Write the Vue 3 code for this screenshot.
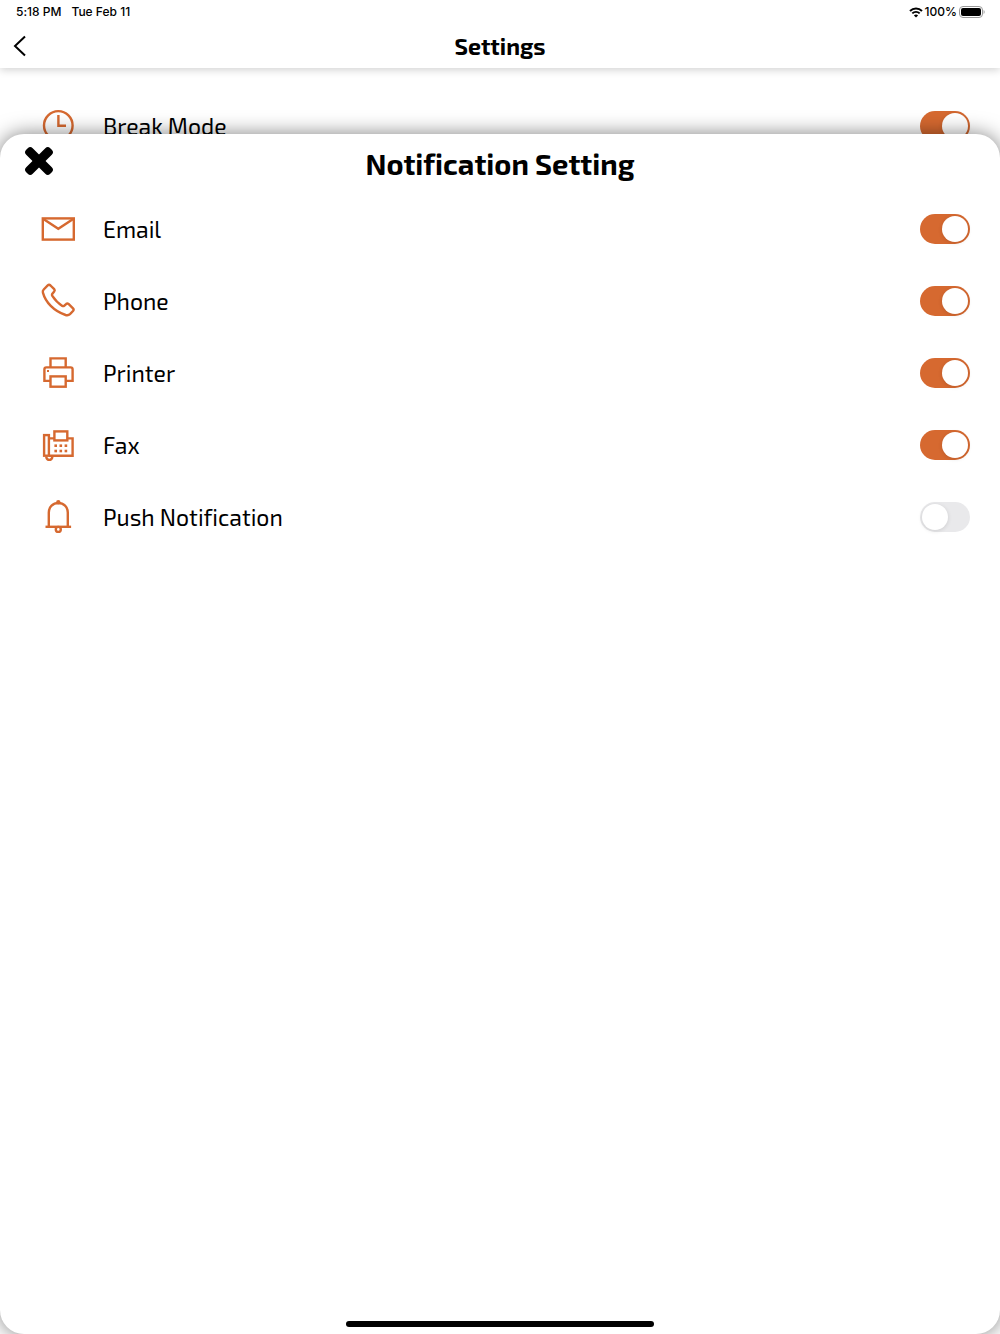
<template>
  <div class="screen">
    <!-- Status bar -->
    <div class="status-bar">
      <span>5:18 PM</span>
      <span class="date">Tue Feb 11</span>
      <div class="status-right">
        <svg class="wifi" viewBox="0 0 14 11" aria-hidden="true">
          <path d="M1 4 C4.4 0.7 9.6 0.7 13 4" />
          <path d="M3.3 6.4 C5.4 4.4 8.6 4.4 10.7 6.4" />
          <path class="dot" d="M7 10.6 L4.9 8.4 C6 7.2 8 7.2 9.1 8.4 Z" />
        </svg>
        <span>100%</span>
        <svg class="battery" viewBox="0 0 26 12" aria-hidden="true">
          <rect class="shell" x="0.5" y="0.5" width="23" height="11" rx="3.5" />
          <rect x="2" y="2" width="20" height="8" rx="2" />
          <path class="cap" d="M24.6 4 C26 4.6 26 7.4 24.6 8 Z" />
        </svg>
      </div>
    </div>

    <!-- Header -->
    <header class="header">
      <button class="back-btn" aria-label="Back">
        <svg viewBox="0 0 14 22" aria-hidden="true">
          <path d="M12 1.5 L2 11 L12 20.5" />
        </svg>
      </button>
      <h1>Settings</h1>
    </header>

    <!-- Settings list behind the sheet -->
    <main class="content">
      <label class="row">
        <svg class="icon" viewBox="0 0 34 34" aria-hidden="true">
          <circle cx="17.3" cy="16.4" r="14.3" />
          <path d="M17.4 6 V16.7 H25" />
        </svg>
        <span class="name">Break Mode</span>
        <input v-model="breakMode" type="checkbox" class="switch" />
      </label>
    </main>

    <!-- Notification sheet -->
    <section class="sheet">
      <div class="sheet-header">
        <button class="close-btn" aria-label="Close">
          <svg viewBox="0 0 30 30" aria-hidden="true">
            <rect x="-2" y="10.4" width="34" height="9.2" rx="3.5" transform="rotate(45 15 15)" />
            <rect x="-2" y="10.4" width="34" height="9.2" rx="3.5" transform="rotate(-45 15 15)" />
          </svg>
        </button>
        <h2>Notification Setting</h2>
      </div>

      <label v-for="item in items" :key="item.id" class="row">
        <svg class="icon" viewBox="0 0 34 34" aria-hidden="true">
          <template v-if="item.id === 'email'">
            <rect x="1.8" y="6.4" width="31" height="21.2" />
            <path d="M2.4 7 L17.3 16.8 L32.2 7" />
          </template>
          <template v-else-if="item.id === 'phone'">
            <path d="M6.7 1.4 Q8.1 0.2 9.5 1.5 L13.2 5.1 Q14.2 6.2 13.2 7.4 L11.2 9.9 Q10.6 10.9 11.3 11.9 Q15.6 18.4 21.3 21.9 Q22.3 22.4 23.2 21.7 L25.4 19.8 Q26.4 19 27.5 20 L32 24.3 Q33.2 25.6 32 27 L29 30.1 Q27.2 31.8 24.6 31 C12.6 27 4.6 18.2 1.9 8.6 Q1.4 6.8 2.7 5.5 Z" />
          </template>
          <template v-else-if="item.id === 'printer'">
            <path d="M9.5 11 V2.4 H24.7 V11" />
            <path d="M9.5 24.9 H3.4 V13.4 Q3.4 11.4 5.4 11.4 H29.6 Q31.6 11.4 31.6 13.4 V24.9 H24.7" />
            <rect x="9.5" y="20.4" width="15.2" height="10.3" />
            <rect class="fill" x="6" y="14" width="2" height="2" />
          </template>
          <template v-else-if="item.id === 'fax'">
            <rect x="3.1" y="7.1" width="4.8" height="20.6" />
            <path d="M8 10.4 H13.2 M26.4 10.4 H31.6 V27.7 H8" />
            <rect x="13.4" y="3.4" width="12.9" height="9" />
            <path d="M5.4 28.4 V29.6 A3 3 0 0 0 11.2 29.6 V28.4" />
            <g class="fill">
              <rect v-for="n in 6" :key="n" :x="13.4 + ((n - 1) % 3) * 5.1" :y="n > 3 ? 21.7 : 16.4" width="2.6" height="2.6" />
            </g>
          </template>
          <template v-else>
            <path d="M7.8 26.6 V12.6 C7.8 7 12 3 17.3 3 S26.8 7 26.8 12.6 V26.6" />
            <path d="M4.5 26.8 H30.1" />
            <circle cx="17.3" cy="29.4" r="2.5" />
            <circle class="fill" cx="17.3" cy="2.2" r="2.2" />
          </template>
        </svg>
        <span class="name">{{ item.label }}</span>
        <input v-model="item.enabled" type="checkbox" class="switch" />
      </label>

      <div class="home-indicator"></div>
    </section>
  </div>
</template>

<script setup>
import { ref } from 'vue';

const breakMode = ref(true);

const items = ref([
  { id: 'email', label: 'Email', enabled: true },
  { id: 'phone', label: 'Phone', enabled: true },
  { id: 'printer', label: 'Printer', enabled: true },
  { id: 'fax', label: 'Fax', enabled: true },
  { id: 'push', label: 'Push Notification', enabled: false }
]);
</script>

<style>
body {
  margin: 0;
  background: #fff;
}
</style>

<style scoped>
.screen {
  position: relative;
  min-height: 100vh;
  overflow: hidden;
  background: #fff;
  color: #000;
  font-family: 'Exo 2', 'Noto Sans', sans-serif;
  font-variant-ligatures: none;
}

.status-bar {
  position: relative;
  z-index: 1;
  display: flex;
  align-items: center;
  height: 24px;
  padding: 0 15px 0 16px;
  background: #fff;
  font-family: Inter, sans-serif;
  font-size: 12px;
  font-weight: 500;
}

.status-bar span {
  padding-bottom: 2px;
}

.date {
  margin-left: 10px;
}

.status-right {
  display: flex;
  align-items: center;
  gap: 2px;
  margin-left: auto;
}

.wifi {
  width: 14px;
  height: 11px;
  fill: none;
  stroke: #000;
  stroke-width: 2;
}

.wifi .dot {
  fill: #000;
  stroke: none;
}

.battery {
  width: 26px;
  height: 12px;
}

.battery .shell {
  fill: none;
  stroke: #999;
}

.battery .cap {
  fill: #999;
}

.header {
  position: relative;
  display: flex;
  align-items: center;
  justify-content: center;
  height: 44px;
  box-shadow: 0 2px 8px rgba(0, 0, 0, 0.18);
}

.header h1 {
  margin: 0;
  font-size: 23px;
  line-height: 30px;
  font-weight: 700;
}

button {
  padding: 0;
  border: none;
  background: none;
  cursor: pointer;
}

button svg {
  display: block;
  width: 100%;
  height: 100%;
}

.back-btn {
  position: absolute;
  left: 13px;
  top: 11px;
  width: 14px;
  height: 22px;
}

.back-btn svg {
  fill: none;
  stroke: #000;
  stroke-width: 2;
}

.content {
  padding-top: 22px;
}

.row {
  display: flex;
  align-items: center;
  height: 72px;
  padding: 0 30px 0 41px;
  cursor: pointer;
}

.icon {
  width: 34px;
  height: 34px;
  overflow: visible;
  fill: none;
  stroke: #d66930;
  stroke-width: 2.4;
}

.icon .fill {
  fill: #d66930;
  stroke: none;
}

.name {
  flex: 1;
  margin-left: 28px;
  font-size: 23px;
  line-height: 32px;
}

.switch {
  appearance: none;
  box-sizing: border-box;
  width: 50px;
  height: 30px;
  margin: 0;
  padding: 2px;
  border-radius: 15px;
  background: #e9e9eb;
  cursor: pointer;
}

.switch::before {
  content: '';
  display: block;
  width: 26px;
  height: 26px;
  border-radius: 50%;
  background: #fff;
  box-shadow: 0 1px 4px rgba(0, 0, 0, 0.12);
}

.switch:checked {
  background: #d66930;
}

.switch:checked::before {
  margin-left: auto;
}

.sheet {
  position: absolute;
  top: 134px;
  right: 0;
  bottom: 0;
  left: 0;
  display: flex;
  flex-direction: column;
  border-radius: 24px;
  background: #fff;
  box-shadow: 0 0 20px rgba(0, 0, 0, 0.5);
}

.sheet-header {
  position: relative;
  display: flex;
  justify-content: center;
  padding: 10px 0 9px;
}

.sheet-header h2 {
  margin: 0;
  font-size: 29px;
  line-height: 40px;
  font-weight: 700;
}

.close-btn {
  position: absolute;
  left: 24px;
  top: 12px;
  width: 30px;
  height: 30px;
}

.home-indicator {
  width: 308px;
  height: 6px;
  margin: auto auto 7px;
  border-radius: 3px;
  background: #000;
}
</style>
